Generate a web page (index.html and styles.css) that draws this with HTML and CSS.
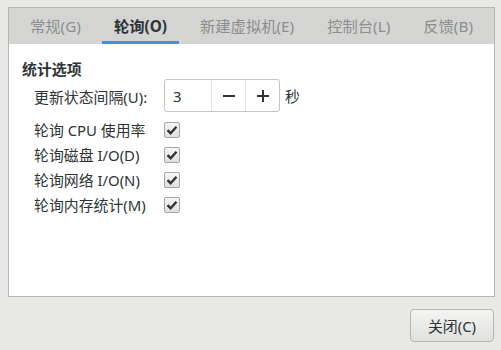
FILE: index.html
```html
<!DOCTYPE html>
<html lang="zh-CN">
<head>
    <meta charset="UTF-8">
    <title>首选项</title>
    <link rel="stylesheet" href="styles.css">
</head>
<body>

<div class="window">
    <div class="notebook">
        <div class="tabs">
            <div class="tab">常规(G)</div>
            <div class="tab active">轮询(O)</div>
            <div class="tab">新建虚拟机(E)</div>
            <div class="tab">控制台(L)</div>
            <div class="tab">反馈(B)</div>
        </div>

        <div class="page">
            <div class="section-title">统计选项</div>
            <div class="options">
                <label class="opt-label">更新状态间隔(U):</label>
                <div class="spin-row">
                    <div class="spin">
                        <div class="spin-value">3</div>
                        <div class="spin-btn">
                            <svg width="12" height="12" viewBox="0 0 12 12"><rect x="0" y="5" width="12" height="2" fill="#2e3436"/></svg>
                        </div>
                        <div class="spin-btn">
                            <svg width="12" height="12" viewBox="0 0 12 12"><rect x="0" y="5" width="12" height="2" fill="#2e3436"/><rect x="5" y="0" width="2" height="12" fill="#2e3436"/></svg>
                        </div>
                    </div>
                    <span class="unit">秒</span>
                </div>

                <label class="opt-label">轮询 CPU 使用率</label>
                <div class="check"><span class="box"><svg width="12" height="12" viewBox="0 0 12 12"><path d="M1.5 6.2 L4.6 9.2 L10.5 2.8" fill="none" stroke="#2e3436" stroke-width="2.4"/></svg></span></div>

                <label class="opt-label">轮询磁盘 I/O(D)</label>
                <div class="check"><span class="box"><svg width="12" height="12" viewBox="0 0 12 12"><path d="M1.5 6.2 L4.6 9.2 L10.5 2.8" fill="none" stroke="#2e3436" stroke-width="2.4"/></svg></span></div>

                <label class="opt-label">轮询网络 I/O(N)</label>
                <div class="check"><span class="box"><svg width="12" height="12" viewBox="0 0 12 12"><path d="M1.5 6.2 L4.6 9.2 L10.5 2.8" fill="none" stroke="#2e3436" stroke-width="2.4"/></svg></span></div>

                <label class="opt-label">轮询内存统计(M)</label>
                <div class="check"><span class="box"><svg width="12" height="12" viewBox="0 0 12 12"><path d="M1.5 6.2 L4.6 9.2 L10.5 2.8" fill="none" stroke="#2e3436" stroke-width="2.4"/></svg></span></div>
            </div>
        </div>
    </div>

    <div class="footer">
        <button class="close-btn">关闭(C)</button>
    </div>
</div>

</body>
</html>
```

FILE: styles.css
```css
body {
    margin: 0;
    padding: 0;
    background-color: #e8e8e7;
    font-family: "Noto Sans", "Noto Sans CJK SC", sans-serif;
    font-size: 14.9px;
    color: #2e3436;
}
.window {
    width: 501px;
    height: 350px;
    padding: 7px 6px 0 8px;
    box-sizing: border-box;
}
.notebook {
    height: 290px;
    border: 1px solid #b6b6b3;
    background: #ffffff;
    box-sizing: border-box;
    display: flex;
    flex-direction: column;
}
.tabs {
    display: flex;
    gap: 9px;
    height: 36px;
    padding-left: 9px;
    background: #d4d4d2;
}
.tab {
    padding: 0 12px;
    display: flex;
    align-items: center;
    font-size: 15.3px;
    color: #8b8e8f;
    border-bottom: 3px solid transparent;
    padding-top: 1px;
}
.tab.active {
    color: #2e3436;
    font-weight: bold;
    border-bottom-color: #4a90d9;
}
.page {
    padding: 15px 13px;
}
.section-title {
    font-weight: bold;
    line-height: 20px;
}
.options {
    display: grid;
    grid-template-columns: 130px auto;
    row-gap: 5px;
    padding-left: 12px;
    align-items: center;
}
.opt-label {
    line-height: 20px;
}
.spin-row {
    display: flex;
    align-items: center;
    gap: 5px;
    margin-bottom: 3px;
}
.spin {
    display: flex;
    height: 33px;
    border: 1px solid #c3c3c0;
    border-radius: 3px;
    box-sizing: border-box;
}
.spin-value {
    width: 46px;
    padding-left: 8px;
    box-sizing: border-box;
    display: flex;
    align-items: center;
}
.spin-btn {
    width: 33px;
    border-left: 1px solid #e2e2e0;
    display: flex;
    align-items: center;
    justify-content: center;
}
.unit {
    line-height: 20px;
}
.check {
    height: 20px;
    display: flex;
    align-items: center;
}
.box {
    width: 14px;
    height: 14px;
    border: 1px solid #a4a6a3;
    border-radius: 2px;
    background: linear-gradient(#f6f6f5, #e0e0de);
    display: flex;
    align-items: center;
    justify-content: center;
}
.footer {
    display: flex;
    justify-content: flex-end;
    padding-top: 12px;
    padding-right: 1px;
}
.close-btn {
    width: 84px;
    height: 33px;
    font-family: inherit;
    font-size: 14.9px;
    color: #2e3436;
    border: 1px solid #b6b6b3;
    border-radius: 4px;
    background: linear-gradient(#f4f4f3, #e0e0de);
}
```
